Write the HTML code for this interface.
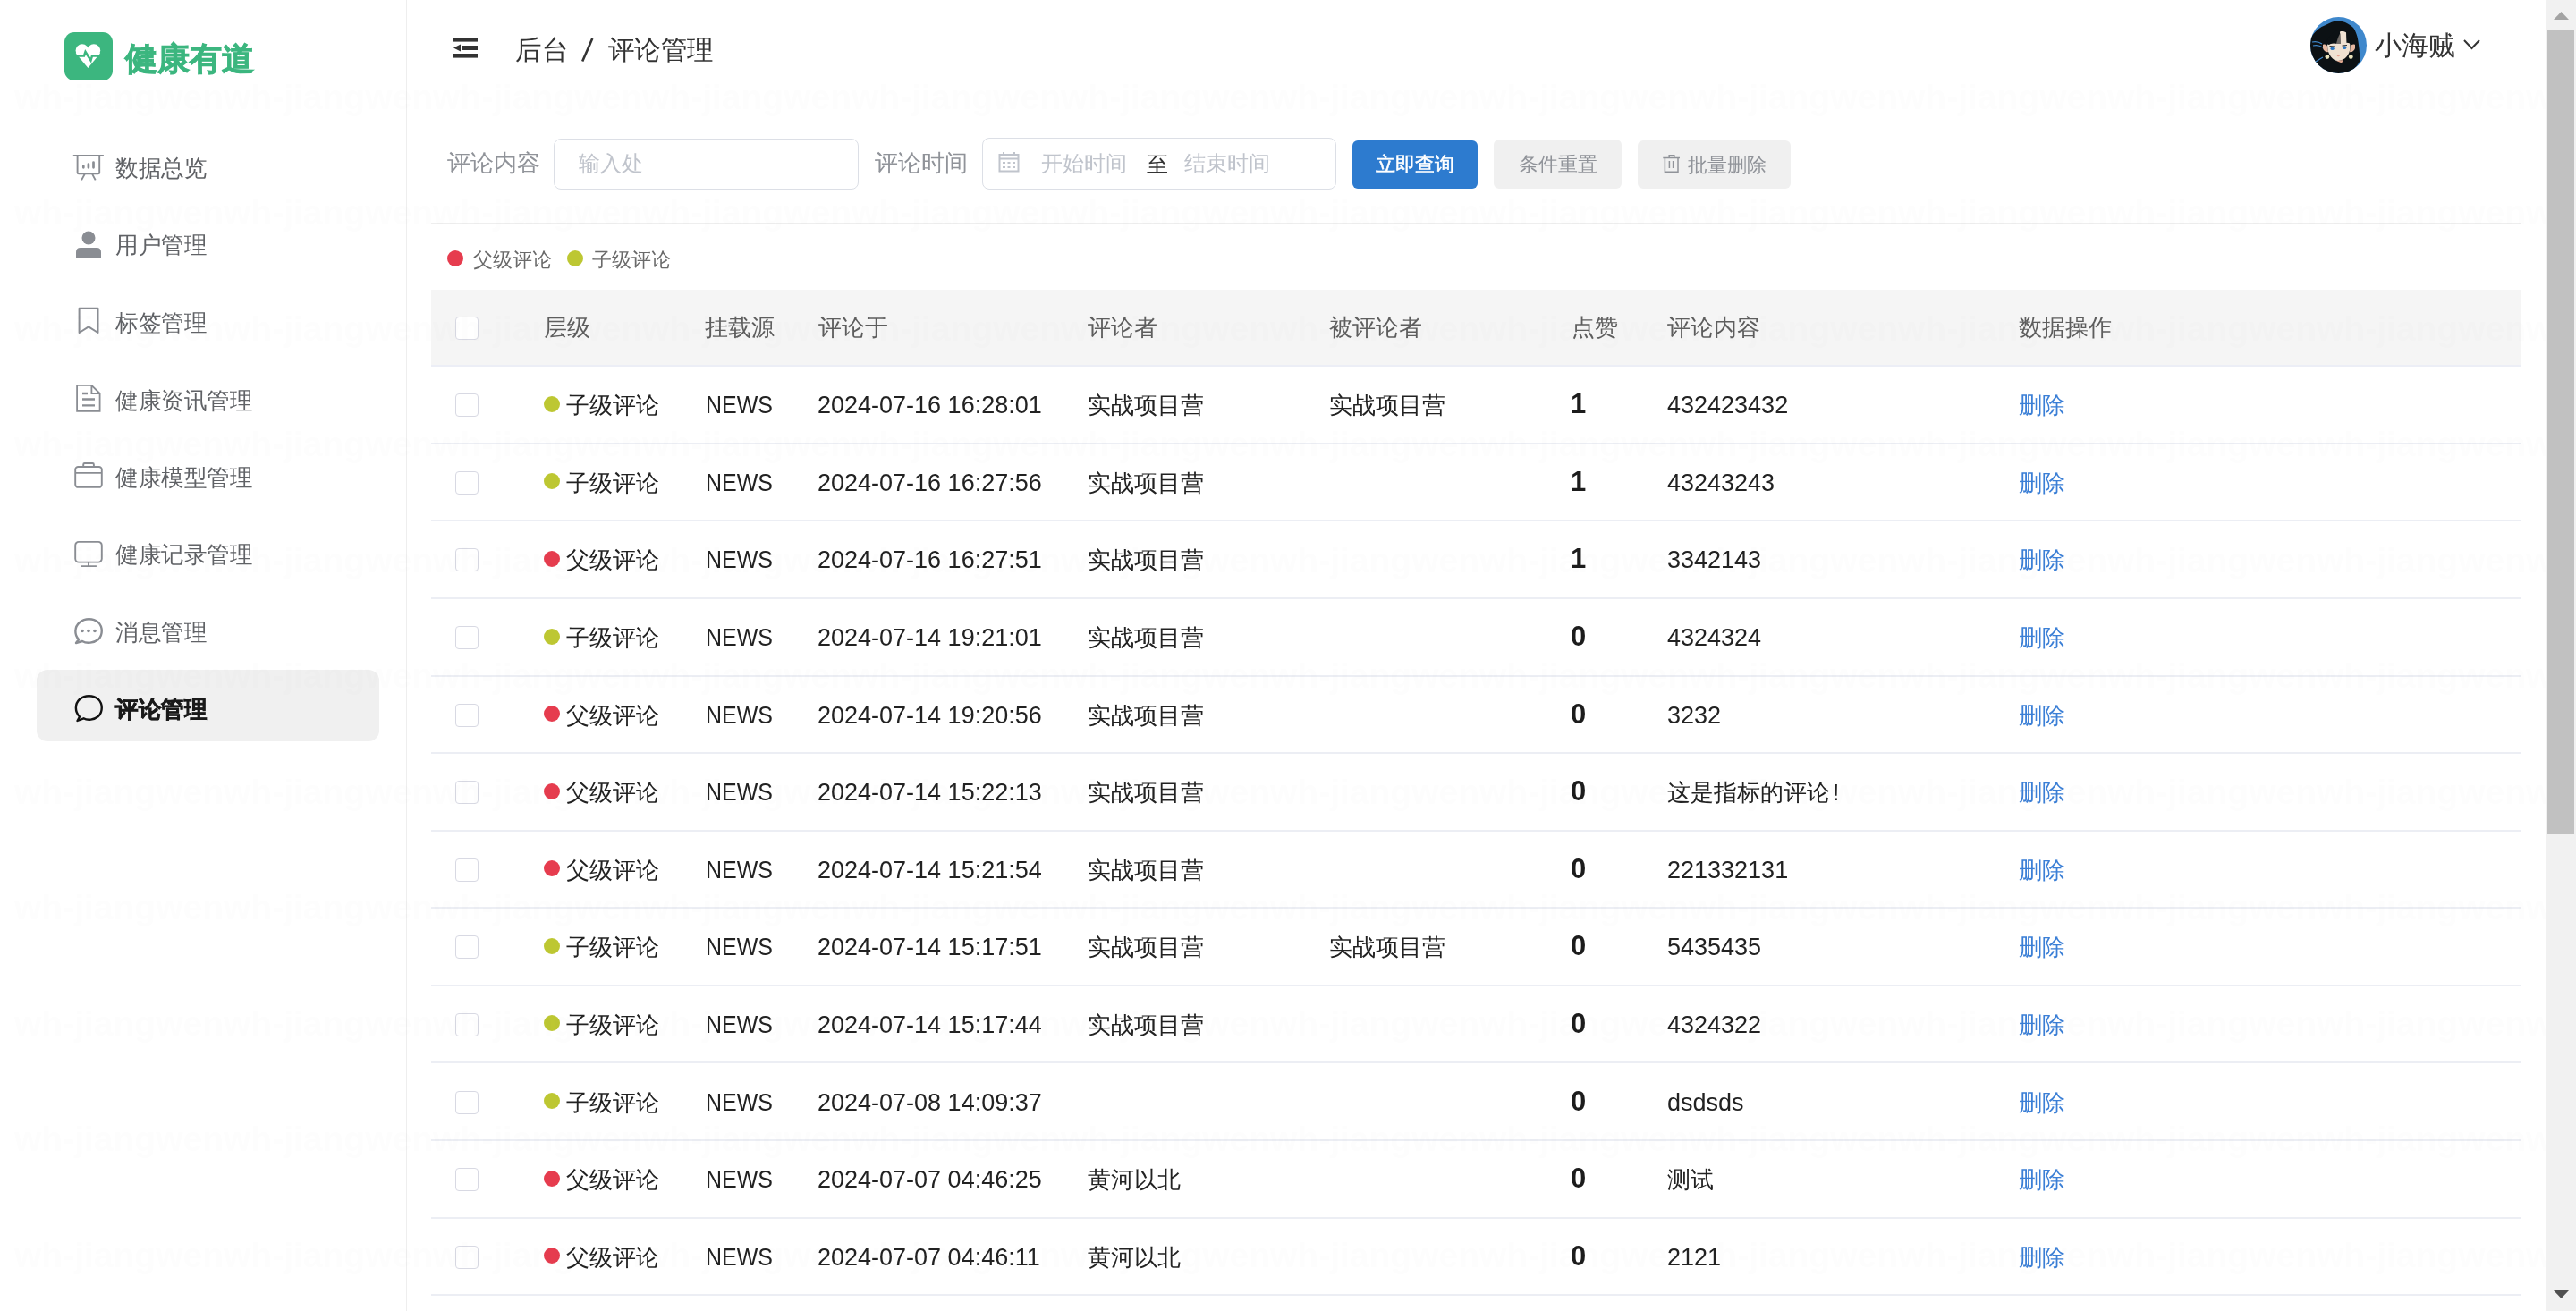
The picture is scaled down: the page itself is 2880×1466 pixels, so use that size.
<!DOCTYPE html>
<html><head><meta charset="utf-8">
<style>
*{box-sizing:border-box;margin:0;padding:0}
html,body{width:2880px;height:1466px;overflow:hidden;background:#fff}
body{font-family:"Liberation Sans",sans-serif;position:relative;color:#333}
.a{position:absolute;white-space:nowrap;line-height:1}
.side{position:absolute;left:0;top:0;width:455px;height:1466px;border-right:1px solid #eeeeee;background:#fff}
.mi{position:absolute;left:0;width:455px;height:80px}
.mi .t{position:absolute;left:129px;top:27px;transform:scaleX(0.982);transform-origin:0 0;font-size:26px;line-height:26px;color:#606266}
.mi svg{position:absolute;left:82px;top:24px}
.hline{position:absolute;height:1px;background:#eeeeee}
.lbl{font-size:26px;color:#909399}
.btn{position:absolute;height:54px;border-radius:6px;font-size:22px;line-height:54px;text-align:center}
.th{position:absolute;font-size:26px;line-height:26px;color:#5e5e5e}
.row{position:absolute;left:482px;width:2336px;height:87px;border-bottom:1.6px solid #ebeef5}
.td{position:absolute;font-size:26px;line-height:26px;color:#222}
.cb{position:absolute;left:27px;width:26px;height:26px;border:1.3px solid #d8d9e3;border-radius:4px;background:#fff}
.dot{position:absolute;width:18px;height:18px;border-radius:50%}
.wm{position:absolute;left:16px;font-size:39px;line-height:40px;letter-spacing:0px;font-weight:bold;color:#fdfdfd;white-space:nowrap}
.news{font-size:27px;transform:scaleX(0.925);transform-origin:0 0}
.dt{font-size:27px}
.like{font-size:31px;font-weight:bold;color:#1c1c1c}
.num{font-size:27px}
</style></head><body>

<!-- sidebar -->
<div class="side">
  <div class="a" style="left:72px;top:36px;width:54px;height:54px;border-radius:11px;background:#3cb67f">
    <svg width="54" height="54" viewBox="0 0 54 54" style="position:absolute;left:0;top:0">
      <circle cx="19.9" cy="20.6" r="7.3" fill="#fff"/><circle cx="32.9" cy="20.6" r="7.3" fill="#fff"/>
      <path d="M12.7 23.5 L26.4 40 L40.1 23.5 L26.4 17.5 Z" fill="#fff"/>
      <path d="M6 26.4 L22 26.4 L23.5 22 L29.5 31.5 L31 26.4 L48 26.4" fill="none" stroke="#3cb67f" stroke-width="2.5" stroke-linejoin="miter"/>
    </svg>
  </div>
  <div class="a" style="left:140px;top:44px;font-size:36px;font-weight:bold;color:#3cb67f;line-height:44px;-webkit-text-stroke:0.9px #3cb67f">健康有道</div>

  <div class="mi" style="top:148px">
    <svg width="34" height="32" viewBox="0 0 34 32" overflow="visible"><path d="M0.6 1.9 H33.2" stroke="#8a8d93" stroke-width="1.9" stroke-linecap="round"/><path d="M4.6 1.9 V21 Q4.6 22.4 6 22.4 H27.8 Q29.2 22.4 29.2 21 V1.9 M12.9 22.4 L9.1 29.4 M21 22.4 L24.7 29.4" fill="none" stroke="#8a8d93" stroke-width="1.9"/><path d="M11.3 13.65 V15.35 M16.9 11.65 V15.35 M22.5 9.55 V15.35" stroke="#8a8d93" stroke-width="2.7" stroke-linecap="round"/></svg>
    <div class="t">数据总览</div>
  </div>
  <div class="mi" style="top:234px">
    <svg width="34" height="32" viewBox="0 0 34 32"><circle cx="17" cy="8" r="7.5" fill="#8a8d93"/><path d="M3 30 V24 Q3 19 8 19 H26 Q31 19 31 24 V30 Z" fill="#8a8d93"/></svg>
    <div class="t">用户管理</div>
  </div>
  <div class="mi" style="top:321px">
    <svg width="34" height="32" viewBox="0 0 34 32" overflow="visible"><path d="M6.6 -0.2 H27.5 V27 L17.05 20.3 L6.6 27 Z" fill="none" stroke="#8a8d93" stroke-width="2" stroke-linejoin="round"/></svg>
    <div class="t">标签管理</div>
  </div>
  <div class="mi" style="top:408px">
    <svg width="34" height="32" viewBox="0 0 34 32" overflow="visible"><path d="M4.1 -1.1 H20.4 L29.6 8 V27.9 H4.1 Z M20.4 -1.1 V8 H29.6" fill="none" stroke="#8a8d93" stroke-width="1.8"/><path d="M10 8 H16 M10 14.5 H24 M10 21.4 H24" stroke="#8a8d93" stroke-width="2.3"/></svg>
    <div class="t">健康资讯管理</div>
  </div>
  <div class="mi" style="top:494px">
    <svg width="34" height="32" viewBox="0 0 34 32" overflow="visible"><path d="M5.4 4 H28.6 A3.2 3.2 0 0 1 31.8 7.2 V23.7 A3.2 3.2 0 0 1 28.6 26.9 H5.4 A3.2 3.2 0 0 1 2.2 23.7 V7.2 A3.2 3.2 0 0 1 5.4 4 Z M2.2 10.9 H31.8 M11.2 4 V1.4 Q11.2 0 12.6 0 H21.5 Q22.9 0 22.9 1.4 V4" fill="none" stroke="#8a8d93" stroke-width="1.9"/></svg>
    <div class="t">健康模型管理</div>
  </div>
  <div class="mi" style="top:580px">
    <svg width="34" height="32" viewBox="0 0 34 32" overflow="visible"><path d="M6 1.9 H28 A3.8 3.8 0 0 1 31.8 5.7 V20.8 A3.8 3.8 0 0 1 28 24.6 H6 A3.8 3.8 0 0 1 2.2 20.8 V5.7 A3.8 3.8 0 0 1 6 1.9 Z M17 24.6 V29.1 M8 29.1 H25.9" fill="none" stroke="#8a8d93" stroke-width="1.9"/></svg>
    <div class="t">健康记录管理</div>
  </div>
  <div class="mi" style="top:667px">
    <svg width="34" height="32" viewBox="0 1 34 32"><path d="M6 25 C1 20 1 11 7 6 C13 1 22 1 28 6 C33 11 33 20 28 25 C23 29 15 30 10 27 L3 29 Z" fill="none" stroke="#8a8d93" stroke-width="2.4" stroke-linejoin="round"/><circle cx="10" cy="15.5" r="1.8" fill="#8a8d93"/><circle cx="17" cy="15.5" r="1.8" fill="#8a8d93"/><circle cx="24" cy="15.5" r="1.8" fill="#8a8d93"/></svg>
    <div class="t">消息管理</div>
  </div>
  <div class="a" style="left:41px;top:749px;width:383px;height:80px;border-radius:12px;background:#f0f0f0"></div>
  <div class="mi" style="top:753px">
    <svg width="34" height="32" viewBox="0 1 34 32"><path d="M7 25.5 C1.5 20 1.5 11 7 6 C13 1 22 1 28 6 C33 11 33 20 28 25 C23 29 16 30 11.5 27.3 L4.5 30 L7 25.5 Z" fill="none" stroke="#111" stroke-width="2.4" stroke-linejoin="round"/></svg>
    <div class="t" style="color:#1a1a1a;font-weight:bold;-webkit-text-stroke:0.6px #1a1a1a">评论管理</div>
  </div>
</div>

<!-- header -->
<svg class="a" style="left:507px;top:42px" width="28" height="23" viewBox="0 0 28 23"><rect x="0" y="0" width="27" height="4.6" fill="#333"/><rect x="10" y="9" width="17" height="5" fill="#333"/><rect x="0" y="18" width="27" height="4.6" fill="#333"/><path d="M0 11.5 L8 7.5 V15.5 Z" fill="#333"/></svg>
<div class="a" style="left:575.5px;top:41px;font-size:30px;color:#333;transform:scaleX(0.985);transform-origin:0 0">后台</div>
<svg class="a" style="left:648px;top:41px" width="18" height="30" viewBox="0 0 18 30"><path d="M14.3 2 L3.2 27.5" stroke="#333" stroke-width="2.6"/></svg>
<div class="a" style="left:680px;top:41px;font-size:30px;color:#333;transform:scaleX(0.982);transform-origin:0 0">评论管理</div>

<div class="a" style="left:2583px;top:19px;width:63px;height:63px;border-radius:50%;background:#3f88cc;overflow:hidden">
  <svg width="63" height="63" viewBox="0 0 63 63">
    <path d="M0 24 C5 16 11 11 17 9 C22 6 26 4.5 30 4.4 C34 4.4 37 5 39 6 C43 8 46 10 48 12 C51 16 53 22 54 31 C55 38 55.5 45 55 50 C53 54 50 57 46 60 L43 63 L0 63 Z" fill="#0c1114"/>
    <path d="M2 28 C6 27 10 28 13 30 M3 32 C7 31 11 32 14 34 M6 50 C9 48 12 46 14 45" stroke="#3f88cc" stroke-width="1.2" fill="none"/>
    <path d="M14 31 C16 30 19 31 19 33 L20 39 C18 40 15 38 14 35 Z M50 31 C48 30 45 31 45 33 L44 39 C46 40 49 38 50 35 Z" fill="#e8b8a0"/>
    <path d="M19 30 C19 36 20 41 23 44.5 C26 48 29 49.5 31.5 49 C35 48.5 38 47 40 45 C43 42 44.5 38 44.5 33 L44 28 Z" fill="#efe1d2"/>
    <path d="M33 16.5 C35 15.5 39 16 40.5 18 L41 30 L33.5 30 Z" fill="#efe1d2"/>
    <path d="M17 30 C20 22 26 15 33 14 C31 18 30 24 29.5 30 C27 29 24 29 21 31 Z M40 16 C43 19 45 24 45.5 31 C44 29.5 42 28.5 40.5 29 Z" fill="#0c1114"/>
    <path d="M29 30 C30 26 31 22 33.5 18 L34 30 Z" fill="#6f6a66"/>
    <ellipse cx="24.6" cy="35.2" rx="2.1" ry="1.9" fill="#2c78c4"/>
    <ellipse cx="38.2" cy="34.2" rx="2.1" ry="1.9" fill="#2c78c4"/>
    <path d="M21.5 32.5 L27.5 33 M35.5 32 L41 31.5" stroke="#2a2a2a" stroke-width="1"/>
    <ellipse cx="31.3" cy="43.5" rx="1.6" ry="0.7" fill="#e8a090"/>
    <circle cx="18.9" cy="44.5" r="2.4" fill="#ebe3bb"/>
    <circle cx="45.3" cy="44.5" r="2.4" fill="#ebe3bb"/>
    <path d="M29 49 L37 48 L35 51.5 Z" fill="#e0a890"/>
  </svg>
</div>
<div class="a" style="left:2655px;top:36px;font-size:30px;color:#333">小海贼</div>
<svg class="a" style="left:2754px;top:44px" width="19" height="12" viewBox="0 0 19 12"><path d="M1 1 L9.5 10 L18 1" fill="none" stroke="#333" stroke-width="2"/></svg>

<div class="hline" style="left:482px;top:108px;width:2364px"></div>

<!-- filter -->
<div class="a lbl" style="left:500px;top:169px">评论内容</div>
<div class="a" style="left:619px;top:155px;width:341px;height:57px;border:1.5px solid #dcdfe6;border-radius:8px"></div>
<div class="a" style="left:647px;top:171px;font-size:24px;color:#c0c4cc">输入处</div>
<div class="a lbl" style="left:978px;top:169px">评论时间</div>
<div class="a" style="left:1098px;top:154px;width:396px;height:58px;border:1.5px solid #dcdfe6;border-radius:8px"></div>
<svg class="a" style="left:1116px;top:170px" width="24" height="23" viewBox="0 0 24 23"><path d="M1.5 3 H22.5 V21.5 H1.5 Z M1.5 7.5 H22.5" fill="none" stroke="#c0c4cc" stroke-width="2"/><path d="M6 0 V5 M18 0 V5" stroke="#c0c4cc" stroke-width="2"/><path d="M5 12 H8 M10.5 12 H13.5 M16 12 H19 M5 17 H8 M10.5 17 H13.5 M16 17 H19" stroke="#c0c4cc" stroke-width="1.8"/></svg>
<div class="a" style="left:1164px;top:171px;font-size:24px;color:#c0c4cc">开始时间</div>
<div class="a" style="left:1282px;top:172px;font-size:24px;color:#333">至</div>
<div class="a" style="left:1324px;top:171px;font-size:24px;color:#c0c4cc">结束时间</div>
<div class="btn" style="left:1512px;top:157px;width:140px;background:#2d7bcf;color:#fff;-webkit-text-stroke:0.5px #fff">立即查询</div>
<div class="btn" style="left:1670px;top:156px;height:55px;line-height:55px;width:143px;background:#f0f0f0;color:#909399">条件重置</div>
<div class="btn" style="left:1831px;top:156.5px;height:54.5px;line-height:55px;width:171px;background:#f0f0f0;color:#909399;padding-left:28px">批量删除</div>
<svg class="a" style="left:1859px;top:173px" width="20" height="20" viewBox="0 0 20 20"><path d="M0.3 3.6 H19 M7.2 3.6 V0.8 H12.8 V3.6 M2.4 3.6 V19.2 H17 V3.6 M7.4 7 V15 M11.6 7 V15" fill="none" stroke="#909399" stroke-width="1.5"/></svg>

<div class="hline" style="left:482px;top:249px;width:2336px"></div>

<!-- legend -->
<div class="dot a" style="left:500px;top:280px;background:#e63c4e"></div>
<div class="a" style="left:529px;top:280px;font-size:22px;color:#6a6a6a">父级评论</div>
<div class="dot a" style="left:634px;top:280px;background:#bdc732"></div>
<div class="a" style="left:662px;top:280px;font-size:22px;color:#6a6a6a">子级评论</div>

<!-- table -->
<!--TBL-->
<div class="a" style="left:482px;top:324px;width:2336px;height:86px;background:#f5f5f5;border-bottom:2px solid #eceef6"></div>
<div class="cb" style="left:509px;top:353.5px"></div>
<div class="th" style="left:608px;top:353px">层级</div>
<div class="th" style="left:788px;top:353px">挂载源</div>
<div class="th" style="left:915px;top:353px">评论于</div>
<div class="th" style="left:1216px;top:353px">评论者</div>
<div class="th" style="left:1486px;top:353px">被评论者</div>
<div class="th" style="left:1757px;top:353px">点赞</div>
<div class="th" style="left:1864px;top:353px">评论内容</div>
<div class="th" style="left:2257px;top:353px">数据操作</div>
<div class="hline" style="left:482px;top:495px;width:2336px;height:2px;background:#eceef4"></div>
<div class="cb" style="left:509px;top:440.29px"></div>
<div class="dot" style="left:608px;top:442.79px;background:#bdc732"></div>
<div class="td" style="left:633px;top:440.29px">子级评论</div>
<div class="td news" style="left:789px;top:440.29px">NEWS</div>
<div class="td dt" style="left:914px;top:440.29px">2024-07-16 16:28:01</div>
<div class="td" style="left:1216px;top:440.29px">实战项目营</div>
<div class="td" style="left:1486px;top:440.29px">实战项目营</div>
<div class="td like" style="left:1756px;top:439.29px">1</div>
<div class="td num" style="left:1864px;top:440.29px">432423432</div>
<div class="td" style="left:2257px;top:440.29px;color:#3b7fd6">删除</div>
<div class="hline" style="left:482px;top:581px;width:2336px;height:2px;background:#eceef4"></div>
<div class="cb" style="left:509px;top:526.87px"></div>
<div class="dot" style="left:608px;top:529.37px;background:#bdc732"></div>
<div class="td" style="left:633px;top:526.87px">子级评论</div>
<div class="td news" style="left:789px;top:526.87px">NEWS</div>
<div class="td dt" style="left:914px;top:526.87px">2024-07-16 16:27:56</div>
<div class="td" style="left:1216px;top:526.87px">实战项目营</div>
<div class="td like" style="left:1756px;top:525.87px">1</div>
<div class="td num" style="left:1864px;top:526.87px">43243243</div>
<div class="td" style="left:2257px;top:526.87px;color:#3b7fd6">删除</div>
<div class="hline" style="left:482px;top:668px;width:2336px;height:2px;background:#eceef4"></div>
<div class="cb" style="left:509px;top:613.45px"></div>
<div class="dot" style="left:608px;top:615.95px;background:#e63c4e"></div>
<div class="td" style="left:633px;top:613.45px">父级评论</div>
<div class="td news" style="left:789px;top:613.45px">NEWS</div>
<div class="td dt" style="left:914px;top:613.45px">2024-07-16 16:27:51</div>
<div class="td" style="left:1216px;top:613.45px">实战项目营</div>
<div class="td like" style="left:1756px;top:612.45px">1</div>
<div class="td num" style="left:1864px;top:613.45px">3342143</div>
<div class="td" style="left:2257px;top:613.45px;color:#3b7fd6">删除</div>
<div class="hline" style="left:482px;top:755px;width:2336px;height:2px;background:#eceef4"></div>
<div class="cb" style="left:509px;top:700.03px"></div>
<div class="dot" style="left:608px;top:702.53px;background:#bdc732"></div>
<div class="td" style="left:633px;top:700.03px">子级评论</div>
<div class="td news" style="left:789px;top:700.03px">NEWS</div>
<div class="td dt" style="left:914px;top:700.03px">2024-07-14 19:21:01</div>
<div class="td" style="left:1216px;top:700.03px">实战项目营</div>
<div class="td like" style="left:1756px;top:699.03px">0</div>
<div class="td num" style="left:1864px;top:700.03px">4324324</div>
<div class="td" style="left:2257px;top:700.03px;color:#3b7fd6">删除</div>
<div class="hline" style="left:482px;top:841px;width:2336px;height:2px;background:#eceef4"></div>
<div class="cb" style="left:509px;top:786.61px"></div>
<div class="dot" style="left:608px;top:789.11px;background:#e63c4e"></div>
<div class="td" style="left:633px;top:786.61px">父级评论</div>
<div class="td news" style="left:789px;top:786.61px">NEWS</div>
<div class="td dt" style="left:914px;top:786.61px">2024-07-14 19:20:56</div>
<div class="td" style="left:1216px;top:786.61px">实战项目营</div>
<div class="td like" style="left:1756px;top:785.61px">0</div>
<div class="td num" style="left:1864px;top:786.61px">3232</div>
<div class="td" style="left:2257px;top:786.61px;color:#3b7fd6">删除</div>
<div class="hline" style="left:482px;top:928px;width:2336px;height:2px;background:#eceef4"></div>
<div class="cb" style="left:509px;top:873.19px"></div>
<div class="dot" style="left:608px;top:875.69px;background:#e63c4e"></div>
<div class="td" style="left:633px;top:873.19px">父级评论</div>
<div class="td news" style="left:789px;top:873.19px">NEWS</div>
<div class="td dt" style="left:914px;top:873.19px">2024-07-14 15:22:13</div>
<div class="td" style="left:1216px;top:873.19px">实战项目营</div>
<div class="td like" style="left:1756px;top:872.19px">0</div>
<div class="td" style="left:1864px;top:873.19px">这是指标的评论<span style="margin-left:3px">!</span></div>
<div class="td" style="left:2257px;top:873.19px;color:#3b7fd6">删除</div>
<div class="hline" style="left:482px;top:1014px;width:2336px;height:2px;background:#eceef4"></div>
<div class="cb" style="left:509px;top:959.77px"></div>
<div class="dot" style="left:608px;top:962.27px;background:#e63c4e"></div>
<div class="td" style="left:633px;top:959.77px">父级评论</div>
<div class="td news" style="left:789px;top:959.77px">NEWS</div>
<div class="td dt" style="left:914px;top:959.77px">2024-07-14 15:21:54</div>
<div class="td" style="left:1216px;top:959.77px">实战项目营</div>
<div class="td like" style="left:1756px;top:958.77px">0</div>
<div class="td num" style="left:1864px;top:959.77px">221332131</div>
<div class="td" style="left:2257px;top:959.77px;color:#3b7fd6">删除</div>
<div class="hline" style="left:482px;top:1101px;width:2336px;height:2px;background:#eceef4"></div>
<div class="cb" style="left:509px;top:1046.35px"></div>
<div class="dot" style="left:608px;top:1048.85px;background:#bdc732"></div>
<div class="td" style="left:633px;top:1046.35px">子级评论</div>
<div class="td news" style="left:789px;top:1046.35px">NEWS</div>
<div class="td dt" style="left:914px;top:1046.35px">2024-07-14 15:17:51</div>
<div class="td" style="left:1216px;top:1046.35px">实战项目营</div>
<div class="td" style="left:1486px;top:1046.35px">实战项目营</div>
<div class="td like" style="left:1756px;top:1045.35px">0</div>
<div class="td num" style="left:1864px;top:1046.35px">5435435</div>
<div class="td" style="left:2257px;top:1046.35px;color:#3b7fd6">删除</div>
<div class="hline" style="left:482px;top:1187px;width:2336px;height:2px;background:#eceef4"></div>
<div class="cb" style="left:509px;top:1132.93px"></div>
<div class="dot" style="left:608px;top:1135.43px;background:#bdc732"></div>
<div class="td" style="left:633px;top:1132.93px">子级评论</div>
<div class="td news" style="left:789px;top:1132.93px">NEWS</div>
<div class="td dt" style="left:914px;top:1132.93px">2024-07-14 15:17:44</div>
<div class="td" style="left:1216px;top:1132.93px">实战项目营</div>
<div class="td like" style="left:1756px;top:1131.93px">0</div>
<div class="td num" style="left:1864px;top:1132.93px">4324322</div>
<div class="td" style="left:2257px;top:1132.93px;color:#3b7fd6">删除</div>
<div class="hline" style="left:482px;top:1274px;width:2336px;height:2px;background:#eceef4"></div>
<div class="cb" style="left:509px;top:1219.51px"></div>
<div class="dot" style="left:608px;top:1222.01px;background:#bdc732"></div>
<div class="td" style="left:633px;top:1219.51px">子级评论</div>
<div class="td news" style="left:789px;top:1219.51px">NEWS</div>
<div class="td dt" style="left:914px;top:1219.51px">2024-07-08 14:09:37</div>
<div class="td like" style="left:1756px;top:1218.51px">0</div>
<div class="td num" style="left:1864px;top:1219.51px">dsdsds</div>
<div class="td" style="left:2257px;top:1219.51px;color:#3b7fd6">删除</div>
<div class="hline" style="left:482px;top:1361px;width:2336px;height:2px;background:#eceef4"></div>
<div class="cb" style="left:509px;top:1306.09px"></div>
<div class="dot" style="left:608px;top:1308.59px;background:#e63c4e"></div>
<div class="td" style="left:633px;top:1306.09px">父级评论</div>
<div class="td news" style="left:789px;top:1306.09px">NEWS</div>
<div class="td dt" style="left:914px;top:1306.09px">2024-07-07 04:46:25</div>
<div class="td" style="left:1216px;top:1306.09px">黄河以北</div>
<div class="td like" style="left:1756px;top:1305.09px">0</div>
<div class="td" style="left:1864px;top:1306.09px">测试</div>
<div class="td" style="left:2257px;top:1306.09px;color:#3b7fd6">删除</div>
<div class="hline" style="left:482px;top:1447px;width:2336px;height:2px;background:#eceef4"></div>
<div class="cb" style="left:509px;top:1392.67px"></div>
<div class="dot" style="left:608px;top:1395.17px;background:#e63c4e"></div>
<div class="td" style="left:633px;top:1392.67px">父级评论</div>
<div class="td news" style="left:789px;top:1392.67px">NEWS</div>
<div class="td dt" style="left:914px;top:1392.67px">2024-07-07 04:46:11</div>
<div class="td" style="left:1216px;top:1392.67px">黄河以北</div>
<div class="td like" style="left:1756px;top:1391.67px">0</div>
<div class="td num" style="left:1864px;top:1392.67px">2121</div>
<div class="td" style="left:2257px;top:1392.67px;color:#3b7fd6">删除</div>
<div class="a" style="left:2846px;top:0;width:34px;height:1466px;background:#f1f1f1"></div>
<div class="a" style="left:2848px;top:34px;width:30px;height:899px;background:#c1c1c1"></div>
<svg class="a" style="left:2855px;top:13px" width="17" height="9" viewBox="0 0 17 9"><path d="M0 9 L8.5 0 L17 9 Z" fill="#a3a3a3"/></svg>
<svg class="a" style="left:2855px;top:1443px" width="17" height="9" viewBox="0 0 17 9"><path d="M0 0 L8.5 9 L17 0 Z" fill="#505050"/></svg>
<!--/TBL-->
<!--WM-->
<div style="position:absolute;left:0;top:0;width:2846px;height:1466px;overflow:hidden;pointer-events:none;mix-blend-mode:multiply"><div class="wm" style="top:88.6px">wh-jiangwenwh-jiangwenwh-jiangwenwh-jiangwenwh-jiangwenwh-jiangwenwh-jiangwenwh-jiangwenwh-jiangwenwh-jiangwenwh-jiangwenwh-jiangwenwh-jiangwen</div>
<div class="wm" style="top:218.1px">wh-jiangwenwh-jiangwenwh-jiangwenwh-jiangwenwh-jiangwenwh-jiangwenwh-jiangwenwh-jiangwenwh-jiangwenwh-jiangwenwh-jiangwenwh-jiangwenwh-jiangwen</div>
<div class="wm" style="top:347.6px">wh-jiangwenwh-jiangwenwh-jiangwenwh-jiangwenwh-jiangwenwh-jiangwenwh-jiangwenwh-jiangwenwh-jiangwenwh-jiangwenwh-jiangwenwh-jiangwenwh-jiangwen</div>
<div class="wm" style="top:477.1px">wh-jiangwenwh-jiangwenwh-jiangwenwh-jiangwenwh-jiangwenwh-jiangwenwh-jiangwenwh-jiangwenwh-jiangwenwh-jiangwenwh-jiangwenwh-jiangwenwh-jiangwen</div>
<div class="wm" style="top:606.6px">wh-jiangwenwh-jiangwenwh-jiangwenwh-jiangwenwh-jiangwenwh-jiangwenwh-jiangwenwh-jiangwenwh-jiangwenwh-jiangwenwh-jiangwenwh-jiangwenwh-jiangwen</div>
<div class="wm" style="top:736.1px">wh-jiangwenwh-jiangwenwh-jiangwenwh-jiangwenwh-jiangwenwh-jiangwenwh-jiangwenwh-jiangwenwh-jiangwenwh-jiangwenwh-jiangwenwh-jiangwenwh-jiangwen</div>
<div class="wm" style="top:865.6px">wh-jiangwenwh-jiangwenwh-jiangwenwh-jiangwenwh-jiangwenwh-jiangwenwh-jiangwenwh-jiangwenwh-jiangwenwh-jiangwenwh-jiangwenwh-jiangwenwh-jiangwen</div>
<div class="wm" style="top:995.1px">wh-jiangwenwh-jiangwenwh-jiangwenwh-jiangwenwh-jiangwenwh-jiangwenwh-jiangwenwh-jiangwenwh-jiangwenwh-jiangwenwh-jiangwenwh-jiangwenwh-jiangwen</div>
<div class="wm" style="top:1124.6px">wh-jiangwenwh-jiangwenwh-jiangwenwh-jiangwenwh-jiangwenwh-jiangwenwh-jiangwenwh-jiangwenwh-jiangwenwh-jiangwenwh-jiangwenwh-jiangwenwh-jiangwen</div>
<div class="wm" style="top:1254.1px">wh-jiangwenwh-jiangwenwh-jiangwenwh-jiangwenwh-jiangwenwh-jiangwenwh-jiangwenwh-jiangwenwh-jiangwenwh-jiangwenwh-jiangwenwh-jiangwenwh-jiangwen</div>
<div class="wm" style="top:1383.6px">wh-jiangwenwh-jiangwenwh-jiangwenwh-jiangwenwh-jiangwenwh-jiangwenwh-jiangwenwh-jiangwenwh-jiangwenwh-jiangwenwh-jiangwenwh-jiangwenwh-jiangwen</div></div>
<!--/WM-->
</body></html>
